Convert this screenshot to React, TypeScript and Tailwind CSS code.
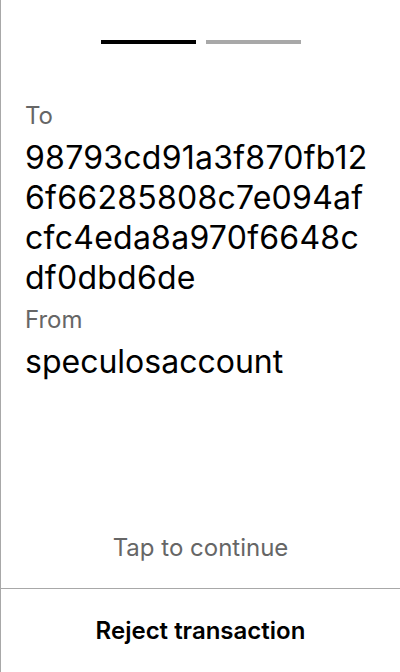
const addressLines = ["98793cd91a3f870fb12", "6f66285808c7e094af", "cfc4eda8a970f6648c", "df0dbd6de"];

export default function App() {
  return (
    <div
      className="flex h-[672px] w-[400px] flex-col border-l border-[#a8a8a8] bg-white text-black"
      style={{ fontFamily: "Inter, 'Noto Sans', sans-serif" }}
    >
      {/* Page indicator */}
      <div className="flex justify-center gap-[10px] pt-10">
        <div className="h-1 w-[95px] bg-black" />
        <div className="h-1 w-[95px] bg-[#a8a8a8]" />
      </div>

      {/* Transaction fields */}
      <div className="flex flex-col px-6 pt-14">
        <p className="text-[24px] leading-8 text-[#666666]">To</p>
        <p className="mt-1.5 text-[32px] leading-10 tracking-[0.25px]">
          {addressLines.map((l) => (
            <span key={l} className="block">{l}</span>
          ))}
        </p>
        <p className="mt-1.5 text-[24px] leading-8 text-[#666666]">From</p>
        <p className="mt-1.5 text-[32px] leading-10">speculosaccount</p>
      </div>

      <div className="flex-1" />

      <div className="pb-6 text-center text-[24px] leading-8 text-[#666666]">Tap to continue</div>

      <button className="flex h-[84px] items-center justify-center border-t border-[#a8a8a8] text-[24px] font-semibold">
        Reject transaction
      </button>
    </div>
  );
}
